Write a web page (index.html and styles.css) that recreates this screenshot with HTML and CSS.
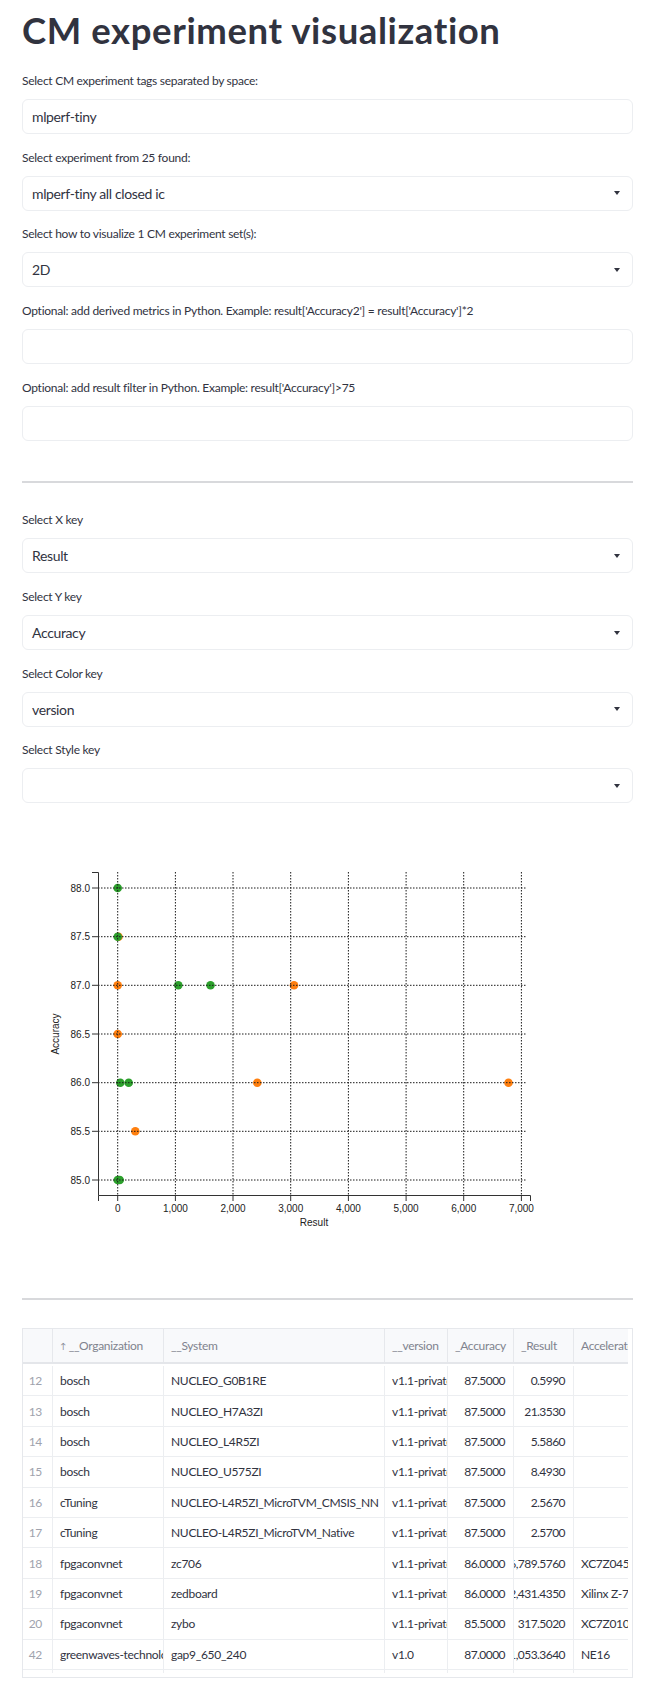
FILE: index.html
```html
<!DOCTYPE html>
<html lang="en">
<head>
<meta charset="utf-8">
<title>CM experiment visualization</title>
<link rel="stylesheet" href="styles.css">
</head>
<body>
<main class="app">
  <h1 class="title">CM experiment visualization</h1>

  <div class="widget">
    <label class="wlabel">Select CM experiment tags separated by space:</label>
    <div class="field"><span class="value">mlperf-tiny</span></div>
  </div>
  <div class="widget">
    <label class="wlabel">Select experiment from 25 found:</label>
    <div class="field select"><span class="value">mlperf-tiny all closed ic</span><span class="caret"></span></div>
  </div>
  <div class="widget">
    <label class="wlabel">Select how to visualize 1 CM experiment set(s):</label>
    <div class="field select"><span class="value">2D</span><span class="caret"></span></div>
  </div>
  <div class="widget">
    <label class="wlabel">Optional: add derived metrics in Python. Example: result['Accuracy2'] = result['Accuracy']*2</label>
    <div class="field"><span class="value"></span></div>
  </div>
  <div class="widget">
    <label class="wlabel">Optional: add result filter in Python. Example: result['Accuracy']&gt;75</label>
    <div class="field"><span class="value"></span></div>
  </div>

  <hr class="divider divider-top">

  <div class="widget">
    <label class="wlabel">Select X key</label>
    <div class="field select"><span class="value">Result</span><span class="caret"></span></div>
  </div>
  <div class="widget">
    <label class="wlabel">Select Y key</label>
    <div class="field select"><span class="value">Accuracy</span><span class="caret"></span></div>
  </div>
  <div class="widget">
    <label class="wlabel">Select Color key</label>
    <div class="field select"><span class="value">version</span><span class="caret"></span></div>
  </div>
  <div class="widget">
    <label class="wlabel">Select Style key</label>
    <div class="field select"><span class="value"></span><span class="caret"></span></div>
  </div>

  <figure class="chart">
    <svg width="611" height="440" viewBox="0 0 611 440" xmlns="http://www.w3.org/2000/svg">
      <g class="pts">
        <circle cx="96.5" cy="119.7" r="4.3" fill="#ff7f0e"/>
        <circle cx="95.7" cy="119.7" r="4.3" fill="#2ca02c"/>
        <circle cx="95.7" cy="71" r="4.3" fill="#2ca02c"/>
        <circle cx="95.7" cy="168.3" r="4.3" fill="#ff7f0e"/>
        <circle cx="156.3" cy="168.3" r="4.3" fill="#2ca02c"/>
        <circle cx="188.5" cy="168.3" r="4.3" fill="#2ca02c"/>
        <circle cx="272" cy="168.3" r="4.3" fill="#ff7f0e"/>
        <circle cx="95.7" cy="217" r="4.3" fill="#ff7f0e"/>
        <circle cx="98.3" cy="265.7" r="4.3" fill="#2ca02c"/>
        <circle cx="106.7" cy="265.7" r="4.3" fill="#2ca02c"/>
        <circle cx="235.3" cy="265.7" r="4.3" fill="#ff7f0e"/>
        <circle cx="486.5" cy="265.7" r="4.3" fill="#ff7f0e"/>
        <circle cx="113.3" cy="314.3" r="4.3" fill="#ff7f0e"/>
        <circle cx="95.7" cy="363" r="4.3" fill="#2ca02c"/>
        <circle cx="97.7" cy="363" r="4.3" fill="#2ca02c"/>
      </g>
      <g class="grid" stroke="#1a1a1a" stroke-width="1" stroke-dasharray="1.5 1.5">
        <line x1="95.7" y1="55" x2="95.7" y2="378"/>
        <line x1="153.4" y1="55" x2="153.4" y2="378"/>
        <line x1="211" y1="55" x2="211" y2="378"/>
        <line x1="268.7" y1="55" x2="268.7" y2="378"/>
        <line x1="326.4" y1="55" x2="326.4" y2="378"/>
        <line x1="384.1" y1="55" x2="384.1" y2="378"/>
        <line x1="441.7" y1="55" x2="441.7" y2="378"/>
        <line x1="499.4" y1="55" x2="499.4" y2="378"/>
        <line x1="76" y1="71" x2="505" y2="71"/>
        <line x1="76" y1="119.7" x2="505" y2="119.7"/>
        <line x1="76" y1="168.3" x2="505" y2="168.3"/>
        <line x1="76" y1="217" x2="505" y2="217"/>
        <line x1="76" y1="265.7" x2="505" y2="265.7"/>
        <line x1="76" y1="314.3" x2="505" y2="314.3"/>
        <line x1="76" y1="363" x2="505" y2="363"/>
      </g>
      <g class="axes" stroke="#333" stroke-width="1" fill="none">
        <path d="M70 55.5 H76.5 V378.5 H508.5 V384"/>
        <path d="M76.5 378.5 V384"/>
        <path d="M70 71 H76 M70 119.7 H76 M70 168.3 H76 M70 217 H76 M70 265.7 H76 M70 314.3 H76 M70 363 H76"/>
        <path d="M95.7 378 V384 M153.4 378 V384 M211 378 V384 M268.7 378 V384 M326.4 378 V384 M384.1 378 V384 M441.7 378 V384 M499.4 378 V384"/>
      </g>
      <g class="ticklabels ylabels">
        <text x="68" y="74.5">88.0</text>
        <text x="68" y="123.2">87.5</text>
        <text x="68" y="171.8">87.0</text>
        <text x="68" y="220.5">86.5</text>
        <text x="68" y="269.2">86.0</text>
        <text x="68" y="317.8">85.5</text>
        <text x="68" y="366.5">85.0</text>
      </g>
      <g class="ticklabels xlabels">
        <text x="95.7" y="394.5">0</text>
        <text x="153.4" y="394.5">1,000</text>
        <text x="211" y="394.5">2,000</text>
        <text x="268.7" y="394.5">3,000</text>
        <text x="326.4" y="394.5">4,000</text>
        <text x="384.1" y="394.5">5,000</text>
        <text x="441.7" y="394.5">6,000</text>
        <text x="499.4" y="394.5">7,000</text>
      </g>
      <text class="axistitle" x="292" y="408.5">Result</text>
      <text class="axistitle" transform="translate(36.5 217) rotate(-90)">Accuracy</text>
    </svg>
  </figure>

  <hr class="divider divider-bottom">

  <div class="table">
    <div class="grid-clip">
      <div class="thead">
        <div class="c idx"></div>
        <div class="c"><span class="sort">↑</span>__Organization</div>
        <div class="c">__System</div>
        <div class="c">__version</div>
        <div class="c">_Accuracy</div>
        <div class="c">_Result</div>
        <div class="c">Accelerator</div>
      </div>
      <div class="tbody">
        <div class="tr"><div class="c idx">12</div><div class="c">bosch</div><div class="c">NUCLEO_G0B1RE</div><div class="c">v1.1-private</div><div class="c num">87.5000</div><div class="c num">0.5990</div><div class="c"></div></div>
        <div class="tr"><div class="c idx">13</div><div class="c">bosch</div><div class="c">NUCLEO_H7A3ZI</div><div class="c">v1.1-private</div><div class="c num">87.5000</div><div class="c num">21.3530</div><div class="c"></div></div>
        <div class="tr"><div class="c idx">14</div><div class="c">bosch</div><div class="c">NUCLEO_L4R5ZI</div><div class="c">v1.1-private</div><div class="c num">87.5000</div><div class="c num">5.5860</div><div class="c"></div></div>
        <div class="tr"><div class="c idx">15</div><div class="c">bosch</div><div class="c">NUCLEO_U575ZI</div><div class="c">v1.1-private</div><div class="c num">87.5000</div><div class="c num">8.4930</div><div class="c"></div></div>
        <div class="tr"><div class="c idx">16</div><div class="c">cTuning</div><div class="c">NUCLEO-L4R5ZI_MicroTVM_CMSIS_NN</div><div class="c">v1.1-private</div><div class="c num">87.5000</div><div class="c num">2.5670</div><div class="c"></div></div>
        <div class="tr"><div class="c idx">17</div><div class="c">cTuning</div><div class="c">NUCLEO-L4R5ZI_MicroTVM_Native</div><div class="c">v1.1-private</div><div class="c num">87.5000</div><div class="c num">2.5700</div><div class="c"></div></div>
        <div class="tr"><div class="c idx">18</div><div class="c">fpgaconvnet</div><div class="c">zc706</div><div class="c">v1.1-private</div><div class="c num">86.0000</div><div class="c num">6,789.5760</div><div class="c">XC7Z045</div></div>
        <div class="tr"><div class="c idx">19</div><div class="c">fpgaconvnet</div><div class="c">zedboard</div><div class="c">v1.1-private</div><div class="c num">86.0000</div><div class="c num">2,431.4350</div><div class="c">Xilinx Z-7020</div></div>
        <div class="tr"><div class="c idx">20</div><div class="c">fpgaconvnet</div><div class="c">zybo</div><div class="c">v1.1-private</div><div class="c num">85.5000</div><div class="c num">317.5020</div><div class="c">XC7Z010</div></div>
        <div class="tr"><div class="c idx">42</div><div class="c">greenwaves-technologies</div><div class="c">gap9_650_240</div><div class="c">v1.0</div><div class="c num">87.0000</div><div class="c num">1,053.3640</div><div class="c">NE16</div></div>
        <div class="tr"><div class="c idx">43</div><div class="c">greenwaves-technologies</div><div class="c">gap9_650_240</div><div class="c">v1.0</div><div class="c num">87.0000</div><div class="c num">1,053.3640</div><div class="c">NE16</div></div>
      </div>
    </div>
  </div>
</main>
</body>
</html>
```

FILE: styles.css
```css
html, body {
  margin: 0;
  padding: 0;
  background: #ffffff;
}

body {
  font-family: Lato, "Open Sans", sans-serif;
  color: #31333f;
}

.app {
  width: 611px;
  margin-left: 22px;
  padding-top: 10.4px;
  display: flex;
  flex-direction: column;
}

.title {
  margin: 0 0 19.5px;
  font-size: 36.5px;
  line-height: 41px;
  font-weight: 700;
  letter-spacing: 0.6px;
  color: #31333f;
}

.widget {
  display: flex;
  flex-direction: column;
  margin-bottom: 13.7px;
}

.wlabel {
  display: block;
  font-size: 12px;
  letter-spacing: -0.27px;
  line-height: 20px;
  margin-bottom: 8px;
  color: #31333f;
  white-space: nowrap;
}

.field {
  height: 35px;
  box-sizing: border-box;
  border: 1px solid #eceef1;
  border-radius: 6px;
  background: #ffffff;
  display: flex;
  align-items: center;
  padding: 0 12px 0 9px;
  font-size: 14px;
  letter-spacing: -0.36px;
  color: #31333f;
}

.field .value {
  flex: 1;
  white-space: nowrap;
}

.caret {
  width: 0;
  height: 0;
  border-left: 3.5px solid transparent;
  border-right: 3.5px solid transparent;
  border-top: 4.5px solid #31333f;
}

.divider {
  border: none;
  height: 2px;
  background: #d8d9dc;
  margin: 0;
  width: 611px;
}

.divider-top {
  margin-top: 26.7px;
  margin-bottom: 27.3px;
}

.chart {
  margin: 0;
  height: 440px;
}

.chart svg {
  display: block;
}

.ticklabels text,
.axistitle {
  font-family: "Liberation Sans", Arial, sans-serif;
  font-size: 10px;
  fill: #222;
}

.ylabels text {
  text-anchor: end;
}

.xlabels text,
.axistitle {
  text-anchor: middle;
}

.divider-bottom {
  margin-top: 41px;
  margin-bottom: 28px;
}

/* data table */
.table {
  box-sizing: border-box;
  width: 611px;
  border: 1px solid #e6e8ec;
  padding: 0 4.5px 4px 0;
  background: #fff;
}

.grid-clip {
  overflow: hidden;
  font-size: 12px;
  letter-spacing: -0.3px;
}

.thead,
.tr {
  display: grid;
  grid-template-columns: 30px 111px 221px 63px 66px 60px 90px;
}

.thead {
  height: 33px;
  background: #f8f9fb;
  border-bottom: 2px solid #e4e6ea;
  margin-bottom: 2px;
  color: #80838e;
}

.thead .c {
  border-right: 1px solid #e6e8ec;
}

.tbody {
  height: 307px;
  overflow: hidden;
}

.tr {
  height: 30.4px;
  box-sizing: border-box;
  border-bottom: 1px solid #eceef1;
}

.c {
  box-sizing: border-box;
  overflow: hidden;
  white-space: nowrap;
  display: flex;
  align-items: center;
  padding: 0 7px;
  border-right: 1px solid #eceef1;
}

.c.num {
  justify-content: flex-end;
  padding-right: 8px;
  letter-spacing: -0.55px;
}

.c.idx {
  justify-content: flex-end;
  padding-right: 10px;
  color: #a0a3ad;
}

.sort {
  font-size: 8px;
  margin-right: 3px;
}
```
